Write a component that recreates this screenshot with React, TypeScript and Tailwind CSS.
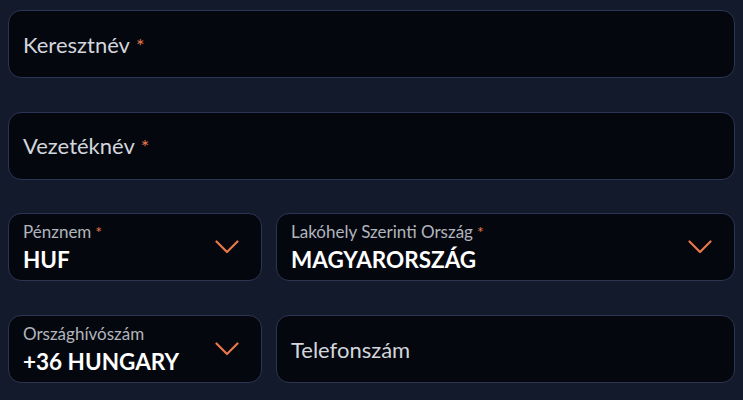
import React from 'react'

const Chevron = () => (
  <svg width="24" height="14" viewBox="0 0 24 14" fill="none" className="shrink-0">
    <path d="M1.5 1.5 L12 12 L22.5 1.5" stroke="#e8774a" strokeWidth="2.2" strokeLinecap="round" strokeLinejoin="round" />
  </svg>
)

const Star = ({ small }: { small?: boolean }) => (
  <span className={small ? 'text-[#e8774a] text-[16px] ml-[4px]' : 'text-[#e8774a] text-[20px] ml-[6px]'}>*</span>
)

const box = 'h-[68px] rounded-[13px] border border-[#2d3554] bg-[#05070e] flex items-center px-[14px]'

const TextField = ({ label, required }: { label: string; required?: boolean }) => (
  <div className={box}>
    <span className="text-[22px] text-[#d3d6dc]">
      {label}
      {required && <Star />}
    </span>
  </div>
)

const SelectField = ({ label, value, required }: { label: string; value: string; required?: boolean }) => (
  <div className={`${box} justify-between pr-[22px]`}>
    <div className="flex flex-col">
      <span className="text-[17px] leading-[20px] text-[#b1b5bd]">
        {label}
        {required && <Star small />}
      </span>
      <span className="text-[22.5px] leading-[26px] font-bold text-white mt-[5px]">{value}</span>
    </div>
    <Chevron />
  </div>
)

export default function App() {
  return (
    <div className="w-[743px] h-[400px] bg-[#131a2c] px-[8px] pt-[10px] overflow-hidden" style={{ fontFamily: 'Lato, "Noto Sans", sans-serif' }}>
      <div className="flex flex-col gap-[33.7px]">
        <TextField label="Keresztnév" required />
        <TextField label="Vezetéknév" required />
        <div className="grid grid-cols-[254px_1fr] gap-[14px]">
          <SelectField label="Pénznem" value="HUF" required />
          <SelectField label="Lakóhely Szerinti Ország" value="MAGYARORSZÁG" required />
        </div>
        <div className="grid grid-cols-[254px_1fr] gap-[14px]">
          <SelectField label="Országhívószám" value="+36 HUNGARY" />
          <TextField label="Telefonszám" />
        </div>
      </div>
    </div>
  )
}
